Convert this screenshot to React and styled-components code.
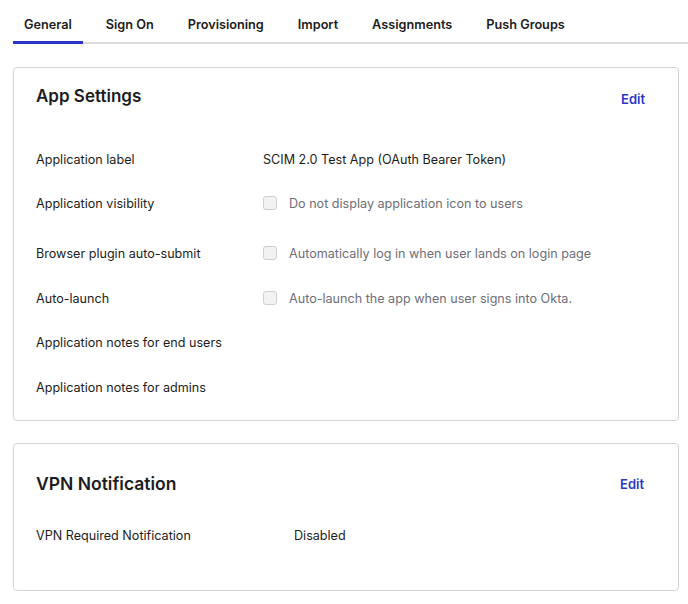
import React from "react";
import styled, { createGlobalStyle } from "styled-components";

const Global = createGlobalStyle`
  html, body { margin: 0; padding: 0; background: #fff; }
  body { font-family: Inter, "Noto Sans", sans-serif; color: #1d1d21; }
  * { box-sizing: border-box; }
`;

const Page = styled.div`
  width: 688px;
  padding: 0 9px 0 13px;
`;

const TabBar = styled.div`
  display: flex;
  gap: 12px;
  height: 44px;
  margin-right: -9px;
  border-bottom: 2px solid #dcdcdf;
`;

const Tab = styled.div`
  padding: 0 11px;
  height: 44px;
  line-height: 49px;
  font-size: 12.7px;
  font-weight: 600;
  color: #1d1d21;
  border-bottom: 3px solid ${(p) => (p.$active ? "#2a34c6" : "transparent")};
  margin-bottom: -2px;
  box-sizing: border-box;
`;

const Card = styled.section`
  border: 1px solid #d4d4d8;
  border-radius: 4px;
  margin-top: ${(p) => p.$mt}px;
  padding: ${(p) => p.$pt}px ${(p) => p.$pr || 33}px ${(p) => p.$pb}px 22px;
`;

const CardHead = styled.div`
  display: flex;
  justify-content: space-between;
  align-items: flex-start;
  height: ${(p) => p.$h}px;
`;

const Title = styled.h2`
  margin: 0;
  font-size: ${(p) => p.$size || 17}px;
  line-height: 24px;
  font-weight: 600;
  color: #1d1d21;
`;

const Edit = styled.a`
  font-size: 13px;
  font-weight: 600;
  color: #2b38c6;
  line-height: 24px;
  margin-top: ${(p) => p.$mt ?? 3}px;
  cursor: pointer;
`;

const Row = styled.div`
  display: grid;
  grid-template-columns: ${(p) => p.$col}px 1fr;
  align-items: center;
  height: ${(p) => p.$h || 44}px;
  padding-top: ${(p) => p.$pt || 0}px;
  font-size: 12.6px;
`;

const Label = styled.div`
  color: #1d1d21;
`;

const Value = styled.div`
  color: #1d1d21;
`;

const CheckLine = styled.label`
  display: flex;
  align-items: center;
  gap: 12px;
  color: #6e6e78;
`;

const Box = styled.span`
  width: 14px;
  height: 14px;
  border: 1px solid #cfcfd4;
  border-radius: 3px;
  background: #f2f2f4;
`;

export default function App() {
  return (
    <>
      <Global />
      <Page>
        <TabBar>
          <Tab $active>General</Tab>
          <Tab>Sign On</Tab>
          <Tab>Provisioning</Tab>
          <Tab>Import</Tab>
          <Tab>Assignments</Tab>
          <Tab>Push Groups</Tab>
        </TabBar>

        <Card $mt={23} $pt={16} $pb={11}>
          <CardHead $h={53}>
            <Title>App Settings</Title>
            <Edit>Edit</Edit>
          </CardHead>
          <Row $col={227}>
            <Label>Application label</Label>
            <Value>SCIM 2.0 Test App (OAuth Bearer Token)</Value>
          </Row>
          <Row $col={227}>
            <Label>Application visibility</Label>
            <CheckLine><Box />Do not display application icon to users</CheckLine>
          </Row>
          <Row $col={227} $h={50} $pt={6}>
            <Label>Browser plugin auto-submit</Label>
            <CheckLine><Box />Automatically log in when user lands on login page</CheckLine>
          </Row>
          <Row $col={227} $h={45} $pt={1}>
            <Label>Auto-launch</Label>
            <CheckLine><Box />Auto-launch the app when user signs into Okta.</CheckLine>
          </Row>
          <Row $col={227}>
            <Label>Application notes for end users</Label>
            <Value />
          </Row>
          <Row $col={227} $h={45} $pt={2}>
            <Label>Application notes for admins</Label>
            <Value />
          </Row>
        </Card>

        <Card $mt={22} $pt={28} $pb={33} $pr={34}>
          <CardHead $h={41}>
            <Title $size={17.5}>VPN Notification</Title>
            <Edit $mt={0}>Edit</Edit>
          </CardHead>
          <Row $col={258}>
            <Label>VPN Required Notification</Label>
            <Value>Disabled</Value>
          </Row>
        </Card>
      </Page>
    </>
  );
}
